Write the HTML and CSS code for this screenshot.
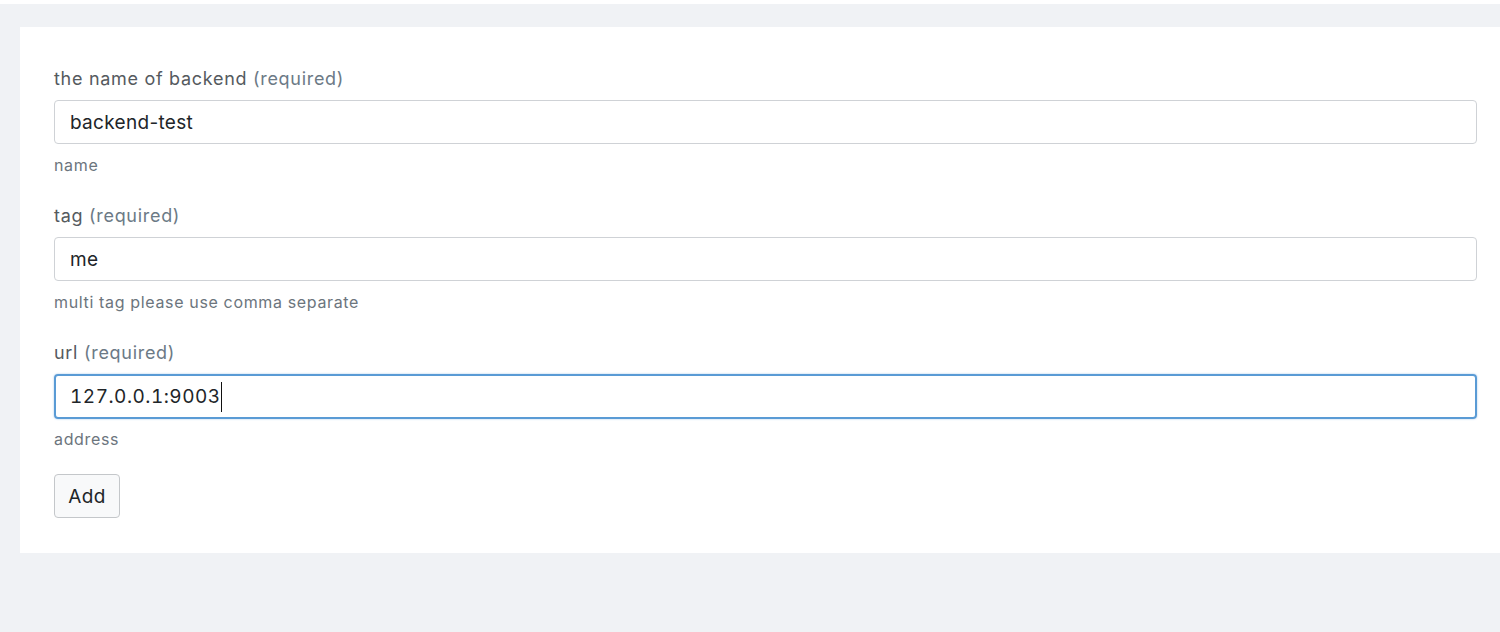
FILE: index.html
```html
<!DOCTYPE html>
<html>
<head>
<meta charset="utf-8">
<link rel="stylesheet" href="styles.css">
</head>
<body>
<div class="topbar"></div>
<main class="main">
  <form class="card">
    <div class="group">
      <label class="label">the name of backend <span class="req">(required)</span></label>
      <div class="input">backend-test</div>
      <div class="help">name</div>
    </div>
    <div class="group">
      <label class="label">tag <span class="req">(required)</span></label>
      <div class="input">me</div>
      <div class="help">multi tag please use comma separate</div>
    </div>
    <div class="group last">
      <label class="label">url <span class="req">(required)</span></label>
      <div class="input focus"><span class="num">127.0.0.1:9003</span><span class="caret"></span></div>
      <div class="help">address</div>
    </div>
    <button type="button" class="btn">Add</button>
  </form>
</main>
</body>
</html>
```
FILE: styles.css
```css
* { box-sizing: border-box; }
html, body { margin: 0; padding: 0; }
body {
  background: #f0f2f5;
  font-family: Inter, "Noto Sans", sans-serif;
  height: 632px;
  overflow: hidden;
}
.topbar { height: 4px; background: #ffffff; }
.main { padding: 23px 0 0 20px; }
.card {
  background: #ffffff;
  padding: 39px 23px 35px 34px;
}
.group { margin-bottom: 28px; }
.group.last { margin-bottom: 25px; }
.label {
  display: block;
  font-size: 18px;
  line-height: 24px;
  letter-spacing: 0.7px;
  color: #555a5e;
  padding-top: 1px;
  margin-bottom: 9px;
}
.req { color: #6c7a86; }
.input {
  height: 44px;
  border: 1px solid #cfd2d6;
  border-radius: 4px;
  padding: 1px 15px 0;
  font-size: 19px;
  line-height: 42px;
  letter-spacing: 0.3px;
  color: #212529;
  display: flex;
  align-items: center;
}
.input.focus {
  height: 45px;
  border: 2px solid #5a9bd5;
  padding-left: 14px;
  box-shadow: 0 0 2px rgba(90, 155, 213, 0.6);
}
.num {
  font-variant-numeric: tabular-nums;
  letter-spacing: 0.5px;
}
.caret {
  display: inline-block;
  width: 1.5px;
  height: 30px;
  background: #111;
}
.help {
  margin-top: 11px;
  font-size: 16px;
  line-height: 20px;
  letter-spacing: 0.65px;
  color: #6c757d;
}
.input.focus + .help { margin-top: 10px; }
.btn {
  display: block;
  height: 44px;
  width: 66px;
  padding: 0;
  border: 1px solid #c4c7ca;
  border-radius: 4px;
  background: #f8f9fa;
  font-family: inherit;
  font-size: 19px;
  letter-spacing: 0.3px;
  color: #212529;
}
```
